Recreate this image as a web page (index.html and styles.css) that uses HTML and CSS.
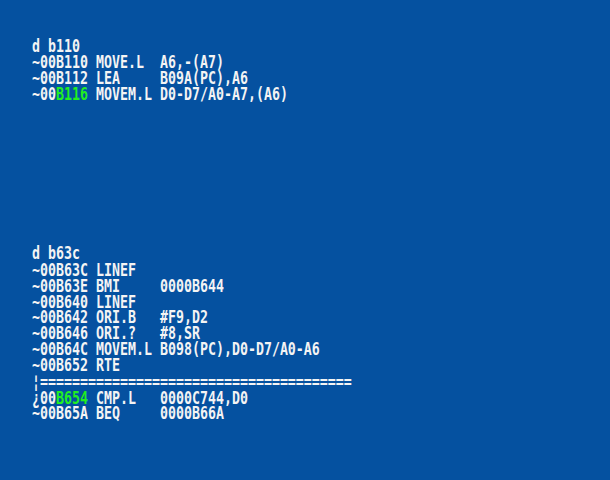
FILE: index.html
```html
<!DOCTYPE html>
<html>
<head>
<meta charset="utf-8">
<link rel="stylesheet" href="styles.css">
</head>
<body>
<div class="console">
<pre class="text">d b110
~00B110 MOVE.L  A6,-(A7)
~00B112 LEA     B09A(PC),A6
~00<span class="hl">B116</span> MOVEM.L D0-D7/A0-A7,(A6)









d b63c
~00B63C LINEF
~00B63E BMI     0000B644
~00B640 LINEF
~00B642 ORI.B   #F9,D2
~00B646 ORI.?   #8,SR
~00B64C MOVEM.L B098(PC),D0-D7/A0-A6
~00B652 RTE
¦=======================================
¿00<span class="hl">B654</span> CMP.L   0000C744,D0
~00B65A BEQ     0000B66A</pre>
</div>
</body>
</html>
```

FILE: styles.css
```css
html, body {
  margin: 0;
  padding: 0;
  background: #0551a0;
  width: 610px;
  height: 480px;
  overflow: hidden;
}

.console {
  padding: 38px 0 0 32px;
}

.text {
  margin: 0;
  font-family: "DejaVu Sans Mono", monospace;
  font-weight: bold;
  font-size: 13.29px;
  line-height: 11.851px;
  color: #f4f4f4;
  transform: scaleY(1.35);
  transform-origin: 0 0;
  white-space: pre;
}

.hl {
  color: #22ee22;
}
```
